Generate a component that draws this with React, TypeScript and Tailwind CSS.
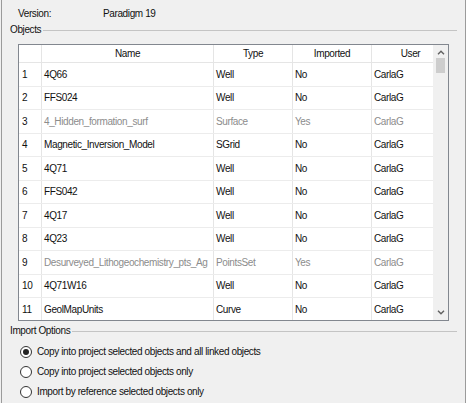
import React from "react";

type Row = {
  no: number;
  name: string;
  type: string;
  imported: string;
  user: string;
  muted?: boolean;
};

const rows: Row[] = [
  { no: 1, name: "4Q66", type: "Well", imported: "No", user: "CarlaG" },
  { no: 2, name: "FFS024", type: "Well", imported: "No", user: "CarlaG" },
  { no: 3, name: "4_Hidden_formation_surf", type: "Surface", imported: "Yes", user: "CarlaG", muted: true },
  { no: 4, name: "Magnetic_Inversion_Model", type: "SGrid", imported: "No", user: "CarlaG" },
  { no: 5, name: "4Q71", type: "Well", imported: "No", user: "CarlaG" },
  { no: 6, name: "FFS042", type: "Well", imported: "No", user: "CarlaG" },
  { no: 7, name: "4Q17", type: "Well", imported: "No", user: "CarlaG" },
  { no: 8, name: "4Q23", type: "Well", imported: "No", user: "CarlaG" },
  { no: 9, name: "Desurveyed_Lithogeochemistry_pts_Ag", type: "PointsSet", imported: "Yes", user: "CarlaG", muted: true },
  { no: 10, name: "4Q71W16", type: "Well", imported: "No", user: "CarlaG" },
  { no: 11, name: "GeolMapUnits", type: "Curve", imported: "No", user: "CarlaG" },
];

const options = [
  "Copy into project selected objects and all linked objects",
  "Copy into project selected objects only",
  "Import by reference selected objects only",
];

function Chevron({ down = false }: { down?: boolean }) {
  return (
    <svg width="8" height="5" viewBox="0 0 8 5" className={down ? "rotate-180" : ""}>
      <path d="M1 4.2 L4 1.2 L7 4.2" fill="none" stroke="#606060" strokeWidth="1.4" />
    </svg>
  );
}

function GroupLabel({ text }: { text: string }) {
  return (
    <div className="flex h-[12px] items-center pl-[8px] pr-[8px]">
      <span className="leading-[12px]">{text}</span>
      <div className="ml-[2px] h-px flex-1 bg-[#c4c4c4]" />
    </div>
  );
}

function Radio({ checked }: { checked?: boolean }) {
  return (
    <span className="flex h-[12px] w-[12px] items-center justify-center rounded-full border border-[#333333] bg-white">
      {checked && <span className="h-[6px] w-[6px] rounded-full bg-[#222222]" />}
    </span>
  );
}

export default function App() {
  return (
    <div className="h-[403px] w-[466px] overflow-hidden bg-[#f0f0f0]">
      <div
        className="ml-[1px] flex h-[403px] w-[465px] flex-col border-x border-[#9b9b9b] text-[10px] tracking-[-0.38px] text-[#111111]"
        style={{ fontFamily: '"Liberation Sans", Arial, sans-serif' }}
      >
        {/* version line */}
        <div className="mt-[8px] flex h-[12px] items-center pl-[16px] leading-[12px]">
          <span className="w-[85px]">Version:</span>
          <span>Paradigm 19</span>
        </div>

        <div className="mt-[4px]">
          <GroupLabel text="Objects" />
        </div>

        {/* objects list */}
        <div className="ml-[16px] mt-[8px] flex h-[277px] w-[431px] overflow-hidden border border-[#82878f] bg-white">
          <div className="flex-1">
            <div className="flex h-[18px] border-b border-[#e5e5e5]">
              <div className="w-[23px] border-r border-[#e5e5e5]" />
              <div className="flex w-[172px] items-center justify-center border-r border-[#e5e5e5]">Name</div>
              <div className="flex w-[79px] items-center justify-center border-r border-[#e5e5e5]">Type</div>
              <div className="flex w-[79px] items-center justify-center border-r border-[#e5e5e5]">Imported</div>
              <div className="flex flex-1 items-center justify-center pl-[16px]">User</div>
            </div>
            {rows.map((r) => (
              <div
                key={r.no}
                className={`flex h-[23.5px] border-b border-[#ececec] ${r.muted ? "text-[#8c8c8c]" : ""}`}
              >
                <div className="flex w-[23px] items-center border-r border-[#e5e5e5] pl-[3px] text-[#111111]">{r.no}</div>
                <div className="flex w-[172px] items-center border-r border-[#e5e5e5] pl-[2px]">{r.name}</div>
                <div className="flex w-[79px] items-center border-r border-[#e5e5e5] pl-[2px]">{r.type}</div>
                <div className="flex w-[79px] items-center border-r border-[#e5e5e5] pl-[2px]">{r.imported}</div>
                <div className="flex flex-1 items-center pl-[2px]">{r.user}</div>
              </div>
            ))}
          </div>

          {/* scrollbar */}
          <div className="flex w-[15px] flex-col bg-[#f0f0f0]">
            <div className="flex h-[13px] items-center justify-center pt-[2px]">
              <Chevron />
            </div>
            <div className="ml-[3px] h-[15px] w-[9px] bg-[#cdcdcd]" />
            <div className="flex-1" />
            <div className="flex h-[14px] items-center justify-center pb-[1px]">
              <Chevron down />
            </div>
          </div>
        </div>

        <div className="mt-[4px]">
          <GroupLabel text="Import Options" />
        </div>

        {/* import options */}
        <div className="mt-[9px] flex flex-col gap-[8px] pl-[18px]">
          {options.map((o, i) => (
            <label key={o} className="flex h-[12px] items-center gap-[5px] leading-[12px]">
              <Radio checked={i === 0} />
              <span>{o}</span>
            </label>
          ))}
        </div>
      </div>
    </div>
  );
}
